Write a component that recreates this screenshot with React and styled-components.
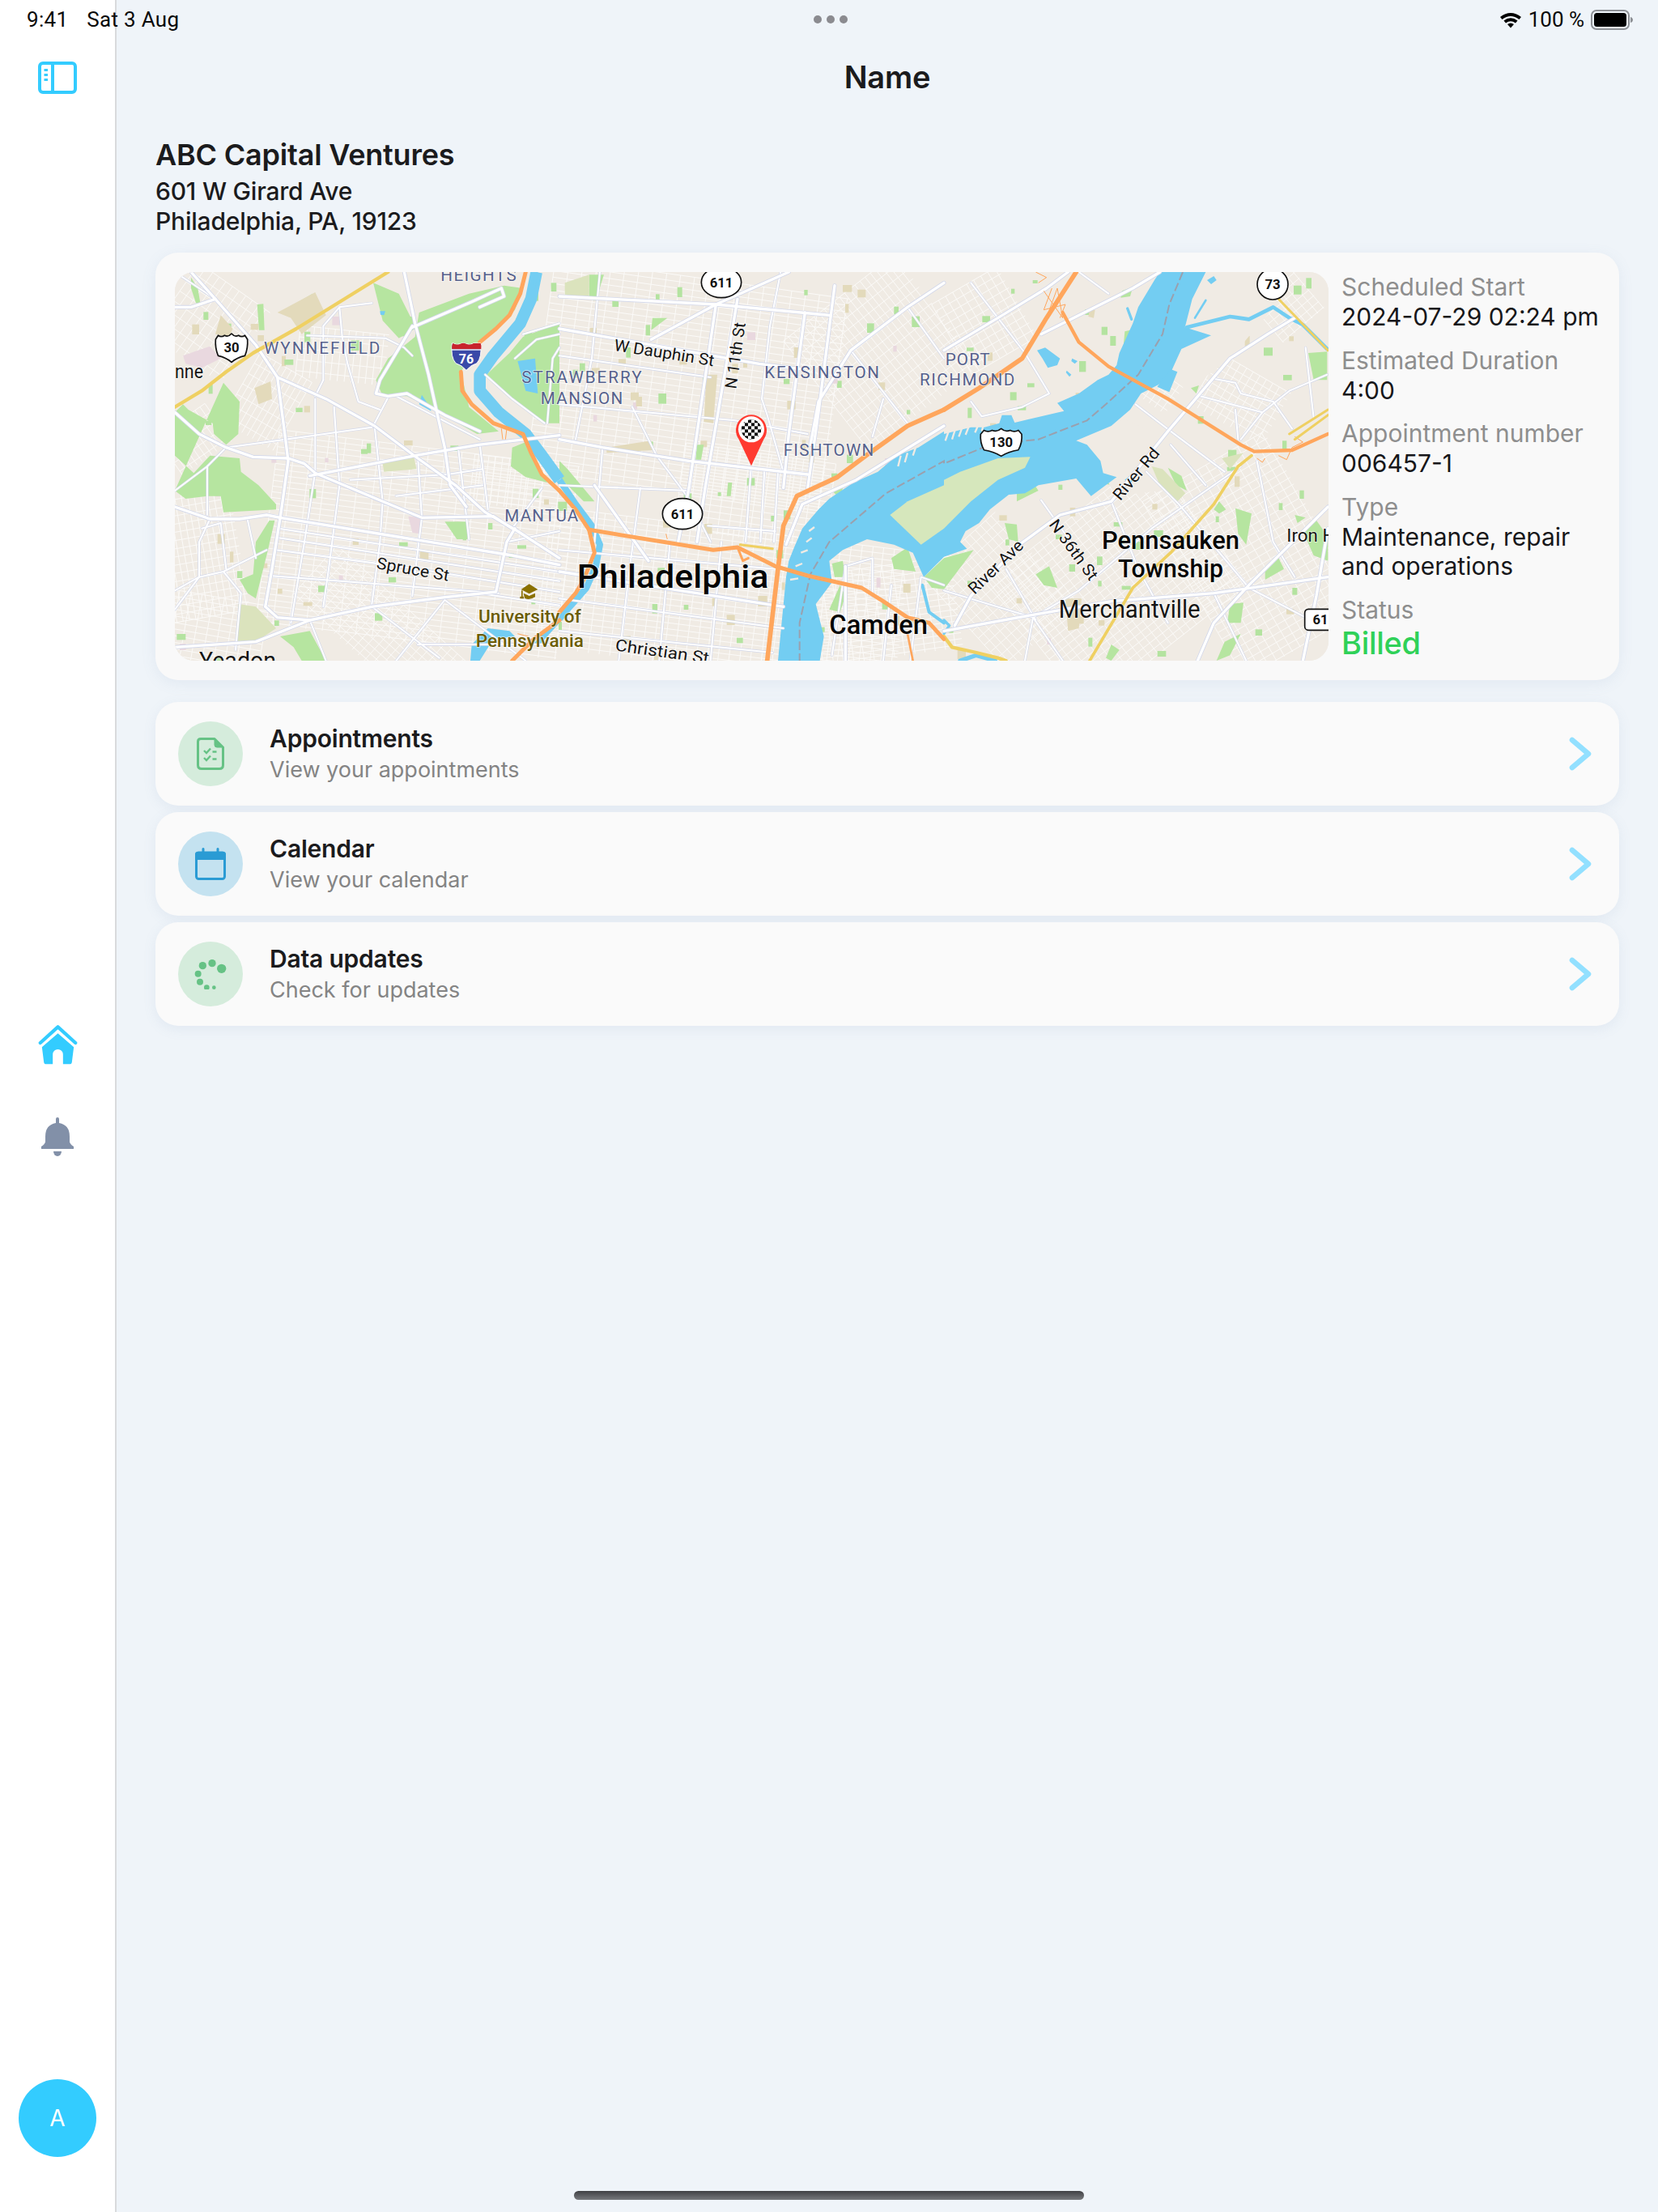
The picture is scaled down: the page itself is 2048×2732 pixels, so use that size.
import React from "react";
import styled, { createGlobalStyle } from "styled-components";

const Global = createGlobalStyle`
  html, body { margin: 0; padding: 0; background: #eff4f9; }
  * { box-sizing: border-box; }
`;

/* ---------- page ---------- */
const Page = styled.div`
  position: relative;
  width: 2048px;
  height: 2732px;
  display: flex;
  overflow: hidden;
  font-family: Inter, "Liberation Sans", sans-serif;
  color: #1b1b1d;
  background: #eff4f9;
`;
const StatusBar = styled.div`
  position: absolute;
  top: 0;
  left: 0;
  right: 0;
  height: 48px;
  padding: 0 30px 0 33px;
  display: grid;
  grid-template-columns: 1fr auto 1fr;
  align-items: center;
  font-family: Roboto, sans-serif;
  font-size: 26px;
  color: #0b0b0b;
`;
const StatusLeft = styled.div`
  display: flex;
  gap: 23px;
  letter-spacing: 0.3px;
`;
const StatusRight = styled.div`
  display: flex;
  justify-content: flex-end;
  align-items: center;
  gap: 8px;
`;
const Dots = styled.div`
  display: flex;
  gap: 6px;
`;
const Dot = styled.span`
  width: 10px;
  height: 10px;
  border-radius: 50%;
  background: #8b8b90;
`;
const Sidebar = styled.aside`
  width: 144px;
  flex: none;
  height: 100%;
  background: #fff;
  border-right: 2px solid #d9dadc;
  display: flex;
  flex-direction: column;
  align-items: center;
  padding: 76px 0 68px;
`;
const NavGroup = styled.nav`
  margin-top: 1149px;
  display: flex;
  flex-direction: column;
  align-items: center;
  gap: 64px;
`;
const Avatar = styled.div`
  margin-top: auto;
  width: 96px;
  height: 96px;
  border-radius: 50%;
  background: #33ccff;
  color: #fff;
  font-size: 28px;
  display: flex;
  align-items: center;
  justify-content: center;
`;
const Main = styled.main`
  flex: 1;
  min-width: 0;
  padding: 0 48px;
  display: flex;
  flex-direction: column;
`;
const PageTitle = styled.h1`
  margin: 72px 0 0;
  height: 46px;
  line-height: 46px;
  font-size: 38px;
  font-weight: 600;
  text-align: center;
  letter-spacing: -0.2px;
`;
const Company = styled.section`
  margin-top: 49px;
  display: flex;
  flex-direction: column;
`;
const CompanyName = styled.h2`
  margin: 0 0 3px;
  font-size: 36px;
  line-height: 48px;
  font-weight: 600;
  letter-spacing: -0.2px;
`;
const Address = styled.div`
  font-size: 30px;
  line-height: 37px;
  font-weight: 500;
  letter-spacing: -0.2px;
`;
const SummaryCard = styled.section`
  margin-top: 20px;
  height: 528px;
  padding: 24px;
  border-radius: 28px;
  background: #f9f9f9;
  box-shadow: 0 4px 18px rgba(110, 140, 180, 0.1);
  display: flex;
`;
const MapFrame = styled.div`
  width: 1425px;
  height: 480px;
  flex: none;
  border-radius: 24px;
  overflow: hidden;
  background: #f0ebe4;
  line-height: 0;
`;
const Info = styled.dl`
  margin: 0 0 0 16px;
  display: flex;
  flex-direction: column;
`;
const InfoLabel = styled.dt`
  font-size: 30px;
  line-height: 37px;
  color: #8e8e8e;
`;
const InfoValue = styled.dd`
  margin: 0 0 17px;
  font-size: 30px;
  line-height: 36.5px;
  color: #17171a;
  ${(p) =>
    p.$status &&
    `
    margin: 0;
    font-size: 38px;
    line-height: 44px;
    font-weight: 500;
    color: #2fd158;
    letter-spacing: -0.3px;
  `}
`;
const RowList = styled.div`
  margin-top: 27px;
  display: flex;
  flex-direction: column;
  gap: 8px;
`;
const Row = styled.div`
  height: 128px;
  padding: 0 34px 0 28px;
  border-radius: 28px;
  background: #fafafa;
  box-shadow: 0 4px 16px rgba(110, 140, 180, 0.1);
  display: flex;
  align-items: center;
  gap: 33px;
`;
const IconDisc = styled.div`
  width: 80px;
  height: 80px;
  flex: none;
  border-radius: 50%;
  background: ${(p) => p.$bg};
  display: flex;
  align-items: center;
  justify-content: center;
`;
const RowText = styled.div`
  flex: 1;
  display: flex;
  flex-direction: column;
  gap: 2px;
`;
const RowTitle = styled.div`
  font-size: 30px;
  line-height: 38px;
  font-weight: 600;
  letter-spacing: -0.2px;
`;
const RowSub = styled.div`
  font-size: 27px;
  line-height: 36px;
  color: #848484;
`;
const HomeBar = styled.div`
  position: absolute;
  left: 709px;
  top: 2706px;
  width: 630px;
  height: 11px;
  border-radius: 6px;
  background: linear-gradient(#3f4044, #77797d);
`;

/* ---------- map text ---------- */
const LABEL = {
  hood: "fill:#56618c;font-weight:400;",
  street: "fill:#141414;font-weight:400;",
  city: "fill:#050505;font-weight:500;",
  uni: "fill:#6b5c05;font-weight:500;",
  shield: "fill:#111;font-weight:700;text-anchor:middle;",
  white: "fill:#fff;font-weight:700;text-anchor:middle;",
};
const MapLabel = styled.text`
  font-family: Roboto, "Liberation Sans", sans-serif;
  font-size: ${(p) => p.$size}px;
  ${(p) => LABEL[p.$kind]}
  ${(p) =>
    p.$kind !== "shield" && p.$kind !== "white"
      ? "paint-order: stroke; stroke: rgba(255,255,255,0.65); stroke-width: 5px;"
      : ""}
`;

/* ---------- map data: units are 3x map pixels; three 1425-wide panels ---------- */
const rand = (() => {
  let s = 4711;
  return () => {
    s = (s * 16807) % 2147483647;
    return s / 2147483647;
  };
})();

function grid(cx, cy, w, h, deg, sx, sy) {
  const a = (deg * Math.PI) / 180;
  const c = Math.cos(a);
  const s = Math.sin(a);
  const pt = (u, v) => `${(cx + u * c - v * s).toFixed(0)} ${(cy + u * s + v * c).toFixed(0)}`;
  let d = "";
  for (let u = -w / 2; u <= w / 2; u += sx) d += `M${pt(u, -h / 2)}L${pt(u, h / 2)}`;
  for (let v = -h / 2; v <= h / 2; v += sy) d += `M${pt(-w / 2, v)}L${pt(w / 2, v)}`;
  return d;
}
const GRIDS = [
  [900, 1010, 1120, 720, 7, 62, 21],
  [130, 190, 320, 320, 35, 30, 42],
  [340, 480, 220, 290, 30, 22, 44],
  [70, 620, 220, 170, -35, 22, 38],
  [620, 310, 330, 190, 6, 26, 42],
  [90, 1040, 300, 480, -10, 24, 30],
  [120, 1330, 420, 260, 10, 42, 24],
  [800, 1360, 760, 250, 42, 30, 24],
  [1230, 780, 260, 180, 7, 26, 24],
  [1900, 420, 1100, 800, 8, 52, 24],
  [2030, 1210, 1340, 520, 7, 40, 22],
  [2620, 300, 520, 520, -38, 24, 38],
  [2150, 830, 560, 320, 8, 40, 24],
  [3000, 180, 280, 300, -30, 30, 30],
  [2620, 1260, 560, 340, -8, 38, 22],
  [3060, 1180, 360, 460, -42, 26, 34],
  [3500, 1150, 760, 600, -38, 30, 26],
  [4000, 1050, 520, 760, -30, 34, 28],
  [3950, 470, 300, 220, 30, 28, 28],
  [3620, 420, 200, 120, 35, 26, 26],
  [4120, 120, 200, 200, -40, 28, 28],
].map((g) => grid(...g)).join("");

const BLOCKS = Array.from({ length: 210 }, () => {
  const x = rand() * 4275;
  const y = rand() * 1440;
  const t = rand();
  return {
    x: x.toFixed(0),
    y: y.toFixed(0),
    w: (12 + rand() * 22).toFixed(0),
    h: (12 + rand() * 28).toFixed(0),
    fill: t < 0.58 ? "#b4e3a0" : t < 0.92 ? "#e3dabb" : "#e9d8df",
  };
});

const PANEL_LINES = [
  {
    major: [
      "60,0 150,100 300,270 380,390 560,470 740,570 900,690 1040,790 1150,890 1270,960 1425,1060",
      "380,390 410,620 420,700 395,880 360,1100 335,1240 380,1280 500,1290",
      "0,520 90,600 190,650 290,685 420,690 480,710 520,745 770,850 915,910 1180,905 1250,950",
      "0,870 130,915 240,915 340,900 390,910 790,975 1250,1050 1425,1085",
      "0,1390 300,1370 500,1290 730,1240 1000,1205 1190,1185 1230,1000 1260,950",
      "850,0 890,190 940,380 1000,650 1020,790 1080,870",
      "500,755 890,680 1125,640 1425,605",
      "880,200 760,400 745,450 790,460 860,450 1000,530 1130,590",
      "880,205 1100,110 1210,60 1220,90 1130,130",
      "0,130 60,130 150,100",
    ],
    minor: [
      "190,650 410,620 730,575",
      "385,950 1425,1110",
      "385,985 1425,1145",
      "375,1030 900,1100 1425,1185",
      "350,1125 1200,1190",
      "520,470 520,740 480,1000 430,1300",
      "590,500 610,790 570,1100 550,1240",
      "740,570 770,850 760,1000 730,1230",
      "900,680 915,910 880,1200",
      "1130,640 1160,880",
      "1050,650 1090,990",
      "550,400 550,200 610,130 730,115",
      "610,130 620,240 640,340 680,480 760,510",
      "490,235 780,245 850,280 880,310",
      "550,400 520,460",
      "790,465 735,570",
      "820,460 1130,620",
      "0,810 120,720 190,650",
      "120,720 120,900",
      "130,915 90,1000 90,1130 180,1110 245,1190 225,1400",
      "90,1130 0,1180",
      "180,1110 340,1030",
      "100,950 170,930 190,1100",
      "270,920 300,1060",
      "1000,1215 1300,1440",
      "500,1290 560,1440",
      "730,1240 980,1430",
      "1000,1215 820,1440",
      "1230,1000 1425,960",
      "1250,950 1360,800",
      "0,1250 90,1130",
      "150,100 0,0",
      "1290,230 1425,190",
      "1150,380 1250,470 1370,560",
      "1260,320 1340,250 1425,230",
      "1380,560 1400,320 1425,280",
      "650,770 1010,750 1140,730",
      "820,830 1140,790",
      "1130,1190 1425,1235",
      "900,1380 1425,1380",
    ],
  },
  {
    major: [
      "580,120 480,800 440,1000",
      "660,100 540,800 510,1000",
      "910,150 850,600 830,800",
      "1020,50 960,520 920,800",
      "0,90 580,120 1000,160",
      "0,210 740,340 900,360",
      "0,620 160,650 480,700 920,750",
      "1425,40 1290,130 1080,290 960,480 930,640",
      "340,250 580,120 850,0",
      "0,1110 830,1240",
      "130,790 330,1070",
      "840,1010 900,860 1100,770 1425,570",
      "1060,1090 1060,1440",
    ],
    minor: [
      "0,310 560,390",
      "0,490 650,550 920,600",
      "0,790 480,810",
      "550,940 800,960",
      "270,500 360,680 480,840 560,1000",
      "710,730 690,1000",
      "760,730 745,1000",
      "810,740 795,1000",
      "820,0 780,200 750,470 770,530 830,740",
      "1290,130 1425,320",
      "1080,290 1290,560",
      "1200,470 1160,610",
      "0,1030 800,1100",
      "0,1210 830,1320",
      "0,1330 790,1410",
      "160,650 130,1000",
      "300,800 260,1100 220,1440",
      "410,1000 370,1440",
      "600,1000 560,1440",
      "150,0 120,320 60,620",
      "1060,1090 1160,1060 1160,1200",
      "1010,1420 1060,1090",
      "1230,1160 1200,1440",
      "1300,1440 1340,1130 1425,1160",
    ],
  },
  {
    major: [
      "40,1310 100,1200 280,1010 430,900 620,850 830,590 1060,320 1200,230 1300,170",
      "0,1330 330,1270 620,1220 1000,1190 1423,1130",
      "0,290 200,170 380,60 460,0",
      "360,230 700,60 800,0",
      "1423,870 1130,1160 1000,1300 940,1440",
      "1423,950 1380,1200 1330,1440",
    ],
    minor: [
      "100,40 200,170 300,300 390,450 290,500 140,535 100,480",
      "710,490 840,590 1040,740",
      "840,640 970,790",
      "750,740 870,860 1130,1170 1360,1290",
      "620,850 720,1100 830,1300",
      "1100,720 770,950 500,1180 330,1280",
      "330,1280 440,1440",
      "0,1180 330,1280",
      "1160,700 1220,1000 1300,1130",
      "950,460 1180,520 1280,440 1420,380",
      "1000,395 1080,410 1100,450 1220,480",
      "1180,520 1100,620",
      "1220,480 1290,580",
      "1340,280 1370,540",
      "1000,1190 1120,1440",
      "230,1100 340,1290",
      "360,845 470,1000",
      "500,0 610,80",
      "1080,510 1090,620",
      "300,1440 330,1280",
    ],
  },
];

const HIGHWAYS = [
  [0, 15, "1300,0 1280,80 1240,160 1190,210 1130,260"],
  [0, 15, "1060,370 1065,440 1100,490 1180,560 1290,600 1320,670 1360,750 1425,810"],
  [0, 15, "1425,1290 1330,1360 1250,1440"],
  [1, 15, "0,810 60,880 110,955 570,1030 660,1020 800,1090 920,1125 1120,1170 1200,1220 1290,1280 1370,1300 1425,1360"],
  [1, 15, "110,955 130,1040 90,1140 60,1190 0,1260"],
  [1, 17, "770,1440 810,1100 830,940 880,830 1030,760 1150,670 1290,570 1425,510"],
  [1, 9, "660,1020 680,1070 700,1060"],
  [1, 8, "1290,1340 1310,1440"],
  [2, 17, "0,510 130,430 290,320 380,170 490,0"],
  [2, 13, "440,150 500,260 610,350 830,470 1100,640 1150,665 1290,660 1423,600"],
];
const FREEWAYS = [
  [0, 13, "0,500 100,440 190,370 290,300 450,210 790,0"],
  [2, 9, "1240,100 1423,290"],
  [2, 11, "1140,680 1090,720 1000,860 840,1040 700,1170 540,1440"],
  [2, 9, "1280,600 1423,510"],
  [2, 9, "1300,620 1423,530"],
  [2, 13, "0,1350 30,1390 120,1410 200,1430 230,1440"],
  [1, 9, "670,1010 790,1025"],
];
const RAMPS = [
  [2, "350,40 380,20 340,0"],
  [2, "370,70 440,170 420,60 380,170"],
  [2, "400,60 370,140 450,120 430,170"],
  [2, "1160,690 1180,705 1190,690"],
  [2, "1240,680 1270,695 1290,650 1330,630 1300,610"],
  [1, "395,970 400,990"],
  [0, "1210,580 1215,620"],
  [0, "1230,580 1225,620"],
  [0, "1270,1340 1310,1350"],
];

const at = (panel, str) =>
  str
    .trim()
    .split(/\s+/)
    .map((p) => {
      const [x, y] = p.split(",");
      return `${+x + panel * 1425},${y}`;
    })
    .join(" ");

const DELAWARE = [
  at(1, "810,1440 840,1130 850,1070 870,1020 900,950 960,880 1000,840 1090,780 1180,740 1250,680 1330,650 1425,590"),
  at(2, "0,600 100,575 150,575 205,560 215,530 250,530 262,558 445,515 420,485 500,450 570,400 610,380 640,345 650,300 700,190 720,130 780,30 800,0 970,0 920,100 893,205 990,235 880,285 830,395 790,420 730,450 690,510 620,570 490,625 530,640 580,700 590,745 640,760 545,830 490,765 350,790 300,820 240,825 170,880 130,930 80,960 60,1000 85,1025 0,1055"),
  at(1, "1425,1055 1350,1130 1310,1040 1240,1010 1140,990 1050,1030 1000,1070 1010,1150 950,1230 980,1350 965,1440"),
].join(" ");

const WATER_SHAPES = [
  at(2, "840,360 865,370 835,445 790,425"),
  at(2, "345,290 375,280 430,320 420,345 385,355 365,320"),
  at(2, "475,320 495,330 485,340 472,330"),
  at(2, "455,365 472,380 465,388 452,372"),
  at(2, "975,30 1000,15 1010,30 990,45"),
  at(2, "670,770 700,745 700,775 685,785"),
  at(0, "1270,330 1335,320 1345,450 1300,440"),
  at(0, "905,490 950,515 945,500 915,455"),
  at(0, "760,145 780,145 775,160 762,158"),
  at(0, "1100,1380 1160,1320 1240,1330 1260,1350 1180,1360 1130,1440 1095,1440"),
];
const PARKS = [
  ["#b6e5a0", at(0, "735,40 830,80 875,170 890,210 830,245 770,180")],
  ["#b6e5a0", at(0, "905,150 1090,80 1220,50 1290,60 1260,140 1130,260 1060,370 1090,500 1200,590 1120,600 960,510 860,460 770,460 745,400 790,320 890,240")],
  ["#b6e5a0", at(0, "1290,240 1425,190 1425,560 1370,560 1250,470 1150,385 1240,300")],
  ["#b6e5a0", at(0, "1250,650 1300,630 1380,780 1300,760 1245,720")],
  ["#b6e5a0", at(0, "180,410 240,480 235,600 190,640 145,600 140,560 50,510 30,490 0,520 0,680 70,745 130,680 240,690 245,740 310,790 375,860 375,880 180,890 170,830 120,830 40,840 0,810")],
  ["#b6e5a0", at(0, "60,20 85,60 95,120 78,115 60,60")],
  ["#b6e5a0", at(0, "305,120 328,118 332,215 312,215")],
  ["#b6e5a0", at(0, "460,110 510,80 525,110 480,135")],
  ["#b6e5a0", at(0, "300,1000 350,920 370,920 345,1030 300,1210 270,1190 240,1140 290,1120")],
  ["#b6e5a0", at(0, "390,1350 500,1330 560,1440 470,1440 440,1390")],
  ["#dbe3bd", at(0, "235,1230 300,1240 375,1320 300,1370 230,1380")],
  ["#dbe3bd", at(0, "770,710 885,680 895,730 775,740")],
  ["#e3dabb", at(0, "150,230 170,160 215,210 200,240")],
  ["#e3dabb", at(0, "380,150 520,75 560,160 470,230 430,170")],
  ["#e3dabb", at(0, "295,430 355,405 360,470 310,490")],
  ["#e9d8df", at(0, "30,310 130,275 170,320 100,355 40,340")],
  ["#e9d8df", at(0, "865,905 915,910 905,970 880,965")],
  ["#b6e5a0", at(0, "1000,925 1085,925 1085,990 1045,990")],
  ["#b6e5a0", at(1, "0,700 30,730 80,790 130,850 90,850 30,790 0,760")],
  ["#b6e5a0", at(1, "110,10 165,10 135,105 110,100")],
  ["#dbe3bd", at(1, "20,40 110,10 110,100 20,90")],
  ["#e3dabb", at(1, "175,650 340,625 345,660 175,670")],
  ["#e3dabb", at(1, "545,380 585,380 570,560 535,555")],
  ["#b6e5a0", at(1, "345,170 400,170 340,215")],
  ["#b6e5a0", at(1, "510,640 535,640 525,695 505,695")],
  ["#b6e5a0", at(1, "625,780 640,780 635,830 620,830")],
  ["#b6e5a0", at(1, "1010,810 1050,800 1040,840")],
  ["#b6e5a0", at(1, "1010,1080 1050,1070 1060,1130 1020,1130")],
  ["#b6e5a0", at(1, "1000,1250 1040,1160 1060,1200 1040,1260")],
  ["#b6e5a0", at(1, "1350,1130 1425,1060 1425,1175 1380,1170")],
  ["#b6e5a0", at(1, "1230,1060 1290,1020 1320,1110 1240,1100")],
  ["#d6e7bc", at(1, "1225,900 1290,850 1425,790 1425,950 1340,1010")],
  ["#d6e7bc", at(2, "0,770 60,740 200,690 320,685 300,725 200,770 100,850 0,950")],
  ["#b6e5a0", at(2, "0,1060 110,1030 0,1175")],
  ["#b6e5a0", at(2, "270,820 330,780 350,810 270,850")],
  ["#b6e5a0", at(2, "660,70 700,55 690,90 655,95")],
  ["#b6e5a0", at(2, "670,220 690,215 700,265 665,275")],
  ["#b6e5a0", at(2, "830,725 880,755 900,810 860,790")],
  ["#dbe3bd", at(2, "770,720 810,730 895,820 865,850 800,790")],
  ["#b6e5a0", at(2, "1350,300 1420,295 1420,400 1370,400")],
  ["#dbe3bd", at(2, "1030,690 1110,670 1060,730")],
  ["#b6e5a0", at(2, "915,430 945,420 935,450")],
  ["#b6e5a0", at(2, "1020,850 1045,880 1020,895 1000,880")],
  ["#b6e5a0", at(2, "1080,875 1140,895 1120,1010 1090,970")],
  ["#b6e5a0", at(2, "1300,900 1340,910 1310,930")],
  ["#b6e5a0", at(2, "1330,960 1380,920 1423,980 1423,1070 1370,1050")],
  ["#b6e5a0", at(2, "1190,1110 1240,1060 1260,1100 1190,1140")],
  ["#b6e5a0", at(2, "340,1120 390,1090 420,1170 370,1160")],
  ["#b6e5a0", at(2, "225,930 270,935 275,1000 240,990")],
  ["#b6e5a0", at(2, "1040,1370 1100,1340 1060,1420 1010,1440")],
  ["#b6e5a0", at(2, "1060,1230 1110,1225 1100,1300 1050,1300")],
  ["#b6e5a0", at(2, "620,1380 650,1400 620,1440 600,1430")],
  ["#e3dabb", at(2, "450,1210 510,1210 500,1320 460,1330")],
  ["#e3dabb", at(2, "540,140 560,140 555,170 535,165")],
];
const COLD_LINES = [
  [2, 14, "900,205 1000,180 1060,165 1130,175 1220,130 1280,170 1330,195 1420,285"],
  [0, 10, "1340,0 1330,60"],
  [2, 10, "680,135 695,175"],
  [2, 8, "930,170 970,105"],
  [2, 10, "0,1290 20,1310 0,1340"],
  [2, 16, "60,1440 120,1420 190,1440"],
  [1, 12, "1345,1160 1370,1260 1425,1300"],
];

const PierLines = "M2855 625L2868 588M2880 620L2892 582M2905 610L2918 575M2930 603L2945 565M2965 595L2980 560M2990 590L3000 555M2680 720L2690 680M2705 705L2715 670M2735 680L2745 650M2350 960L2370 945M2340 1000L2360 985M2320 1040L2345 1030M2300 1090L2325 1080M2280 1140L2310 1135";

function Lines({ data, stroke, width }) {
  return data.map((pts, i) => (
    <polyline key={i} points={pts} fill="none" stroke={stroke} strokeWidth={width} strokeLinecap="round" strokeLinejoin="round" />
  ));
}

function Shield({ cx, cy, w, h, label, size }) {
  const x = cx - w / 2;
  const y = cy - h / 2;
  const d = `M${x + w * 0.08} ${y + h * 0.08} q${w * 0.1} ${h * 0.08} ${w * 0.2} 0 q${w * 0.12} ${h * 0.07} ${w * 0.22} -${h * 0.06} q${w * 0.1} ${h * 0.13} ${w * 0.22} ${h * 0.06} q${w * 0.1} ${h * 0.08} ${w * 0.2} 0 L${x + w} ${y + h * 0.22} q${w * 0.02} ${h * 0.3} -${w * 0.08} ${h * 0.56} q-${w * 0.25} ${h * 0.06} -${w * 0.42} ${h * 0.22} q-${w * 0.17} -${h * 0.16} -${w * 0.42} -${h * 0.22} q-${w * 0.1} -${h * 0.26} -${w * 0.08} -${h * 0.56} Z`;
  return (
    <g>
      <path d={d} fill="#fff" stroke="#111" strokeWidth="5" strokeLinejoin="round" />
      <MapLabel $kind="shield" $size={size} x={cx} y={cy + size * 0.36}>{label}</MapLabel>
    </g>
  );
}

function Oval({ cx, cy, rx, ry, label, size }) {
  return (
    <g>
      <ellipse cx={cx} cy={cy} rx={rx} ry={ry} fill="#fff" stroke="#111" strokeWidth="5" />
      <MapLabel $kind="shield" $size={size} x={cx} y={cy + size * 0.36}>{label}</MapLabel>
    </g>
  );
}

function CityMap() {
  const panelLayer = (key, width, stroke) =>
    PANEL_LINES.map((p, i) => (
      <g key={i} transform={`translate(${i * 1425} 0)`}>
        <Lines data={p[key]} stroke={stroke} width={width} />
      </g>
    ));
  const byPanel = (list, color) =>
    list.map(([panel, w, pts], i) => (
      <polyline key={i} points={at(panel, pts)} fill="none" stroke={color} strokeWidth={w} strokeLinecap="round" strokeLinejoin="round" />
    ));
  return (
    <svg width="1425" height="480" viewBox="0 0 4275 1440">
      <defs>
        <pattern id="checker" width="24" height="24" patternUnits="userSpaceOnUse" x="2124" y="571">
          <rect width="24" height="24" fill="#fff" />
          <rect width="12" height="12" fill="#111" />
          <rect x="12" y="12" width="12" height="12" fill="#111" />
        </pattern>
      </defs>
      <rect width="4275" height="1440" fill="#f0ebe4" />
      <path d={GRIDS} fill="none" stroke="#fbfaf8" strokeWidth="3" />
      {BLOCKS.map((b, i) => (
        <rect key={i} x={b.x} y={b.y} width={b.w} height={b.h} fill={b.fill} />
      ))}
      {/* clear industrial land beside the river */}
      <polygon points={at(2, "520,480 840,620 880,800 640,830 560,700 480,620")} fill="#f0ebe4" />
      <polygon points={at(2, "800,0 1150,0 1240,110 1060,320 900,440 840,380 900,220")} fill="#f0ebe4" />
      {PARKS.map(([fill, pts], i) => (
        <polygon key={i} points={pts} fill={fill} />
      ))}
      <polygon points={DELAWARE} fill="#73cdf2" />
      {WATER_SHAPES.map((pts, i) => (
        <polygon key={i} points={pts} fill="#73cdf2" />
      ))}
      {PARKS.filter((p) => p[0] === "#d6e7bc").map(([fill, pts], i) => (
        <polygon key={i} points={pts} fill={fill} />
      ))}
      <path d={PierLines} stroke="#f0ebe4" strokeWidth="7" fill="none" />
      <polyline points={at(0, "1340,0 1320,100 1280,190 1180,310 1130,380 1130,440 1200,520 1300,600 1360,680 1425,770")} fill="none" stroke="#73cdf2" strokeWidth="44" strokeLinejoin="round" />
      <polyline points={at(1, "0,770 60,860 120,940 150,1010 135,1090 100,1170 30,1250 0,1285")} fill="none" stroke="#73cdf2" strokeWidth="24" strokeLinejoin="round" />
      <polyline points={at(0, "1425,1285 1340,1380")} fill="none" stroke="#73cdf2" strokeWidth="20" />
      {byPanel(COLD_LINES, "#73cdf2")}
      <polyline points={`${at(2, "885,0 835,120 810,230 720,380 600,490 530,550 350,620 170,640 0,710")} ${at(1, "1425,700 1210,820 1000,1000 930,1120 890,1300 890,1440")}`} fill="none" stroke="#9aa0ae" strokeWidth="6" strokeDasharray="32 12" />

      {panelLayer("minor", 10, "#d3d8ea")}
      {panelLayer("minor", 6, "#fff")}
      {panelLayer("major", 15, "#d3d8ea")}
      {panelLayer("major", 10, "#fff")}

      {RAMPS.map(([panel, pts], i) => (
        <polyline key={i} points={at(panel, pts)} fill="none" stroke="#ffa65c" strokeWidth="3" />
      ))}
      {byPanel(FREEWAYS, "#efd062")}
      {byPanel(HIGHWAYS, "#ffa65c")}

      <MapLabel $kind="hood" $size={62} x="985" y="32" textLength="280" lengthAdjust="spacing">HEIGHTS</MapLabel>
      <MapLabel $kind="hood" $size={62} x="330" y="304" textLength="430" lengthAdjust="spacing">WYNNEFIELD</MapLabel>
      <MapLabel $kind="street" $size={74} x="0" y="393" textLength="105" lengthAdjust="spacingAndGlyphs">nne</MapLabel>
      <MapLabel $kind="hood" $size={62} x="1285" y="412" textLength="445" lengthAdjust="spacing">STRAWBERRY</MapLabel>
      <MapLabel $kind="hood" $size={62} x="1355" y="488" textLength="305" lengthAdjust="spacing">MANSION</MapLabel>
      <MapLabel $kind="hood" $size={62} x="1222" y="923" textLength="273" lengthAdjust="spacing">MANTUA</MapLabel>
      <MapLabel $kind="hood" $size={62} x="2185" y="392" textLength="425" lengthAdjust="spacing">KENSINGTON</MapLabel>
      <MapLabel $kind="hood" $size={62} x="2255" y="680" textLength="335" lengthAdjust="spacing">FISHTOWN</MapLabel>
      <MapLabel $kind="hood" $size={62} x="2855" y="345" textLength="165" lengthAdjust="spacing">PORT</MapLabel>
      <MapLabel $kind="hood" $size={62} x="2760" y="420" textLength="352" lengthAdjust="spacing">RICHMOND</MapLabel>
      <MapLabel $kind="street" $size={60} x="745" y="1098" textLength="272" lengthAdjust="spacingAndGlyphs" transform="rotate(10 745 1098)">Spruce St</MapLabel>
      <MapLabel $kind="street" $size={60} x="1625" y="290" textLength="375" lengthAdjust="spacingAndGlyphs" transform="rotate(9 1625 290)">W Dauphin St</MapLabel>
      <MapLabel $kind="street" $size={60} x="2080" y="435" textLength="248" lengthAdjust="spacingAndGlyphs" transform="rotate(-82 2080 435)">N 11th St</MapLabel>
      <MapLabel $kind="street" $size={60} x="1630" y="1402" textLength="350" lengthAdjust="spacingAndGlyphs" transform="rotate(8 1630 1402)">Christian St</MapLabel>
      <MapLabel $kind="street" $size={60} x="3503" y="850" textLength="232" lengthAdjust="spacingAndGlyphs" transform="rotate(-50 3503 850)">River Rd</MapLabel>
      <MapLabel $kind="street" $size={60} x="2963" y="1197" textLength="258" lengthAdjust="spacingAndGlyphs" transform="rotate(-44 2963 1197)">River Ave</MapLabel>
      <MapLabel $kind="street" $size={60} x="3237" y="935" textLength="262" lengthAdjust="spacingAndGlyphs" transform="rotate(54 3237 935)">N 36th St</MapLabel>
      <MapLabel $kind="street" $size={66} x="4120" y="998" textLength="180" lengthAdjust="spacingAndGlyphs">Iron H</MapLabel>
      <MapLabel $kind="city" $size={124} x="1490" y="1170" textLength="710" lengthAdjust="spacingAndGlyphs">Philadelphia</MapLabel>
      <MapLabel $kind="city" $size={98} x="2425" y="1340" textLength="365" lengthAdjust="spacingAndGlyphs">Camden</MapLabel>
      <MapLabel $kind="city" $size={94} x="3435" y="1025" textLength="510" lengthAdjust="spacingAndGlyphs">Pennsauken</MapLabel>
      <MapLabel $kind="city" $size={94} x="3495" y="1130" textLength="390" lengthAdjust="spacingAndGlyphs">Township</MapLabel>
      <MapLabel $kind="street" $size={92} x="3275" y="1280" textLength="525" lengthAdjust="spacingAndGlyphs">Merchantville</MapLabel>
      <MapLabel $kind="street" $size={90} x="90" y="1470" textLength="285" lengthAdjust="spacingAndGlyphs">Yeadon</MapLabel>
      <MapLabel $kind="uni" $size={68} x="1125" y="1300" textLength="380" lengthAdjust="spacingAndGlyphs">University of</MapLabel>
      <MapLabel $kind="uni" $size={68} x="1115" y="1388" textLength="400" lengthAdjust="spacingAndGlyphs">Pennsylvania</MapLabel>

      {/* university marker */}
      <path d="M1283 1176 L1313 1156 L1345 1176 L1313 1192 Z" fill="#8a7000" />
      <path d="M1292 1190 L1313 1200 L1335 1190 V1204 Q1313 1218 1296 1208 Z M1284 1180 h5 v22 h4 v8 h-14 v-8 h5 z" fill="#8a7000" />

      <Shield cx={210} cy={280} w={118} h={108} label="30" size={50} />
      <Shield cx={3062} cy={630} w={152} h={104} label="130" size={50} />
      {/* interstate shield */}
      <g transform="translate(1025 260)">
        <path d="M6 4 q13 8 27 2 q10 -6 22 0 q14 6 27 -2 l26 0 q6 52 -14 74 q-22 6 -39 26 q-17 -20 -39 -26 q-20 -22 -14 -74 Z" fill="#3a49a8" stroke="#fff" strokeWidth="3" />
        <path d="M2 26 q-2 -16 4 -22 q13 8 27 2 q10 -6 22 0 q14 6 27 -2 q8 0 26 0 q4 8 2 22 Z" fill="#c8242c" />
        <rect x="1" y="26" width="108" height="4" fill="#fff" />
        <MapLabel $kind="white" $size={48} x="55" y="78">76</MapLabel>
      </g>
      <Oval cx={2025} cy={38} rx={74} ry={57} label="611" size={50} />
      <Oval cx={1881} cy={896} rx={74} ry={57} label="611" size={50} />
      <Oval cx={4068} cy={45} rx={57} ry={57} label="73" size={50} />
      <rect x="4187" y="1249" width="120" height="78" rx="14" fill="#fff" stroke="#111" strokeWidth="5" />
      <MapLabel $kind="shield" $size={50} x="4245" y="1306">61</MapLabel>

      {/* destination pin */}
      <path d="M2136 718 L2089 618 A57 57 0 1 1 2183 618 Z" fill="#ff3a30" />
      <circle cx="2136" cy="583" r="48" fill="#fff" />
      <circle cx="2136" cy="583" r="37" fill="url(#checker)" />
    </svg>
  );
}

/* ---------- icons ---------- */
const PanelIcon = () => (
  <svg width="48" height="40" viewBox="0 0 48 40">
    <rect x="2" y="2" width="44" height="36" rx="4" fill="none" stroke="#33ccff" strokeWidth="4" />
    <rect x="16" y="2" width="4" height="36" fill="#33ccff" />
    <rect x="7.5" y="9" width="4.5" height="3" fill="#33ccff" />
    <rect x="7.5" y="15" width="4.5" height="3" fill="#33ccff" />
    <rect x="7.5" y="21" width="4.5" height="3" fill="#33ccff" />
  </svg>
);
const HomeIcon = () => (
  <svg width="49" height="50" viewBox="140 103 146 150">
    <path d="M148 172 L213 113 L278 172" fill="none" stroke="#33ccff" strokeWidth="13" strokeLinecap="round" strokeLinejoin="round" />
    <path d="M213 137 L272 188 L265 243 Q264 251 256 251 H232 V215 A19 19 0 0 0 194 215 V251 H170 Q162 251 161 243 L154 188 Z" fill="#33ccff" />
  </svg>
);
const BellIcon = () => (
  <svg width="42" height="50" viewBox="150 441 126 150">
    <path d="M207 465 V450 a6 6 0 0 1 12 0 V465 Q258 472 258 515 V535 Q260 545 273 552 V561 H153 V552 Q166 545 168 535 V515 Q168 472 207 465 Z" fill="#8290a8" />
    <path d="M198 570 H228 A15 18 0 0 1 198 570 Z" fill="#8290a8" />
  </svg>
);
const WifiIcon = () => (
  <svg width="28" height="21" viewBox="0 0 28 21">
    <path d="M1 7 Q14 -3 27 7 L24.5 10 Q14 2 3.5 10 Z M5.5 11.5 Q14 5 22.5 11.5 L20 14.5 Q14 10 8 14.5 Z M10 16 Q14 13 18 16 L14 20.5 Z" fill="#000" />
  </svg>
);
const BatteryIcon = () => (
  <svg width="53" height="25" viewBox="0 0 53 25">
    <rect x="1" y="1" width="46" height="23" rx="6" fill="none" stroke="#8e9196" strokeWidth="2" />
    <rect x="4" y="4" width="40" height="17" rx="3.5" fill="#000" />
    <path d="M49 9 Q52 10 52 12.5 Q52 15 49 16 Z" fill="#8e9196" />
  </svg>
);
const DocIcon = () => (
  <svg width="34" height="40" viewBox="0 0 34 40" fill="none" stroke="#66c285">
    <path d="M5 1.5 H22 L32.5 12 V34 Q32.5 38.5 28 38.5 H6 Q1.5 38.5 1.5 34 V5 Q1.5 1.5 5 1.5 Z" strokeWidth="3" strokeLinejoin="round" />
    <path d="M22 1.5 L32.5 12 H25 Q22 12 22 9 Z" fill="#66c285" strokeWidth="1" />
    <path d="M9 16 L12 19 L17 13.5 M9 25 L12 28 L17 22.5 M19.5 17.5 H24.5 M19.5 26.5 H24.5" strokeWidth="2.4" />
  </svg>
);
const CalendarIcon = () => (
  <svg width="38" height="40" viewBox="0 0 38 40">
    <rect x="1.5" y="6" width="35" height="32.5" rx="3" fill="none" stroke="#2a9bd4" strokeWidth="3" />
    <rect x="0" y="5" width="38" height="10" rx="3" fill="#2a9bd4" />
    <rect x="8.5" y="0" width="3" height="12" rx="1.5" fill="#2a9bd4" stroke="#c4e2f0" strokeWidth="0" />
    <rect x="26.5" y="0" width="3" height="12" rx="1.5" fill="#2a9bd4" />
  </svg>
);
const SPINNER = [
  [281, 1037, 17],
  [246, 1017, 14],
  [211, 1026, 14],
  [194, 1056, 12],
  [201, 1086, 12],
  [226, 1107, 10],
  [253, 1107, 7],
];
const SpinnerIcon = () => (
  <svg width="40" height="38" viewBox="180 1000 120 114" fill="#66c285">
    {SPINNER.map(([cx, cy, r]) => (
      <circle key={cx} cx={cx} cy={cy} r={r} />
    ))}
  </svg>
);
const Chevron = () => (
  <svg width="28" height="42" viewBox="0 0 28 42">
    <path d="M4 4 L24 21 L4 38" fill="none" stroke="#92e0ff" strokeWidth="6.6" strokeLinecap="round" strokeLinejoin="round" />
  </svg>
);

const ROWS = [
  { title: "Appointments", sub: "View your appointments", bg: "#d5ecdc", Icon: DocIcon },
  { title: "Calendar", sub: "View your calendar", bg: "#c4e2f0", Icon: CalendarIcon },
  { title: "Data updates", sub: "Check for updates", bg: "#d5ecdc", Icon: SpinnerIcon },
];
const INFO = [
  ["Scheduled Start", "2024-07-29 02:24 pm"],
  ["Estimated Duration", "4:00"],
  ["Appointment number", "006457-1"],
  ["Type", "Maintenance, repair and operations"],
];

export default function App() {
  return (
    <Page>
      <Global />
      <Sidebar>
        <PanelIcon />
        <NavGroup>
          <HomeIcon />
          <BellIcon />
        </NavGroup>
        <Avatar>A</Avatar>
      </Sidebar>
      <Main>
        <PageTitle>Name</PageTitle>
        <Company>
          <CompanyName>ABC Capital Ventures</CompanyName>
          <Address>601 W Girard Ave</Address>
          <Address>Philadelphia, PA, 19123</Address>
        </Company>
        <SummaryCard>
          <MapFrame>
            <CityMap />
          </MapFrame>
          <Info>
            {INFO.map(([label, value]) => (
              <React.Fragment key={label}>
                <InfoLabel>{label}</InfoLabel>
                <InfoValue>{value}</InfoValue>
              </React.Fragment>
            ))}
            <InfoLabel>Status</InfoLabel>
            <InfoValue $status>Billed</InfoValue>
          </Info>
        </SummaryCard>
        <RowList>
          {ROWS.map(({ title, sub, bg, Icon }) => (
            <Row key={title}>
              <IconDisc $bg={bg}>
                <Icon />
              </IconDisc>
              <RowText>
                <RowTitle>{title}</RowTitle>
                <RowSub>{sub}</RowSub>
              </RowText>
              <Chevron />
            </Row>
          ))}
        </RowList>
      </Main>
      <StatusBar>
        <StatusLeft>
          <span>9:41</span>
          <span>Sat 3 Aug</span>
        </StatusLeft>
        <Dots>
          <Dot />
          <Dot />
          <Dot />
        </Dots>
        <StatusRight>
          <WifiIcon />
          <span>100 %</span>
          <BatteryIcon />
        </StatusRight>
      </StatusBar>
      <HomeBar />
    </Page>
  );
}
